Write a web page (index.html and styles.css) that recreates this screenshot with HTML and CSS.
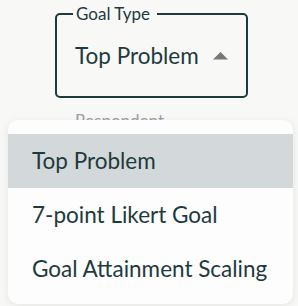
FILE: index.html
```html
<!DOCTYPE html>
<html lang="en">
<head>
    <meta charset="UTF-8">
    <meta name="viewport" content="width=device-width, initial-scale=1.0">
    <title>Goal Type</title>
    <link rel="stylesheet" href="styles.css">
</head>
<body>
    <div class="form">
        <fieldset class="select-field">
            <legend>Goal Type</legend>
            <div class="select-value">
                <span>Top Problem</span>
                <svg class="caret" width="15" height="8" viewBox="0 0 15 8"><path d="M0 7.5 L7.5 0 L15 7.5 Z" fill="#777"/></svg>
            </div>
        </fieldset>
        <div class="field-label">Respondent</div>
    </div>

    <ul class="menu">
        <li class="menu-item selected">Top Problem</li>
        <li class="menu-item">7-point Likert Goal</li>
        <li class="menu-item">Goal Attainment Scaling</li>
    </ul>
</body>
</html>
```

FILE: styles.css
```css
:root {
    --ink: #1e3a3d;
    --muted: #9aa2a3;
    --page: #f8f8f7;
}

* {
    margin: 0;
    padding: 0;
    box-sizing: border-box;
}

body {
    font-family: 'Lato', 'Noto Sans', sans-serif;
    background-color: var(--page);
    color: var(--ink);
    height: 306px;
    overflow: hidden;
}

.form {
    padding: 4px 0 0 55px;
}

.select-field {
    width: 193px;
    height: 94px;
    border: 2.5px solid var(--ink);
    border-radius: 5px;
    padding: 0 18px;
}

.select-field legend {
    font-size: 17px;
    padding: 0 7px 0 3px;
    margin-left: -2px;
    line-height: 20px;
}

.select-value {
    display: flex;
    align-items: center;
    justify-content: space-between;
    font-size: 22.5px;
    line-height: 26px;
    margin-top: 19px;
}

.caret {
    margin-top: 0;
}

.field-label {
    margin-top: 12px;
    margin-left: 20px;
    font-size: 17px;
    color: var(--muted);
}

.menu {
    list-style: none;
    position: absolute;
    top: 120px;
    left: 8px;
    width: 285px;
    padding: 14px 0 8px;
    background-color: #fdfdfd;
    border-radius: 10px;
    box-shadow: 0 2px 10px rgba(0,0,0,0.08);
}

.menu-item {
    height: 54px;
    line-height: 54px;
    padding-left: 24px;
    font-size: 22.5px;
}

.menu-item.selected {
    background-color: #d3d9da;
}
```
